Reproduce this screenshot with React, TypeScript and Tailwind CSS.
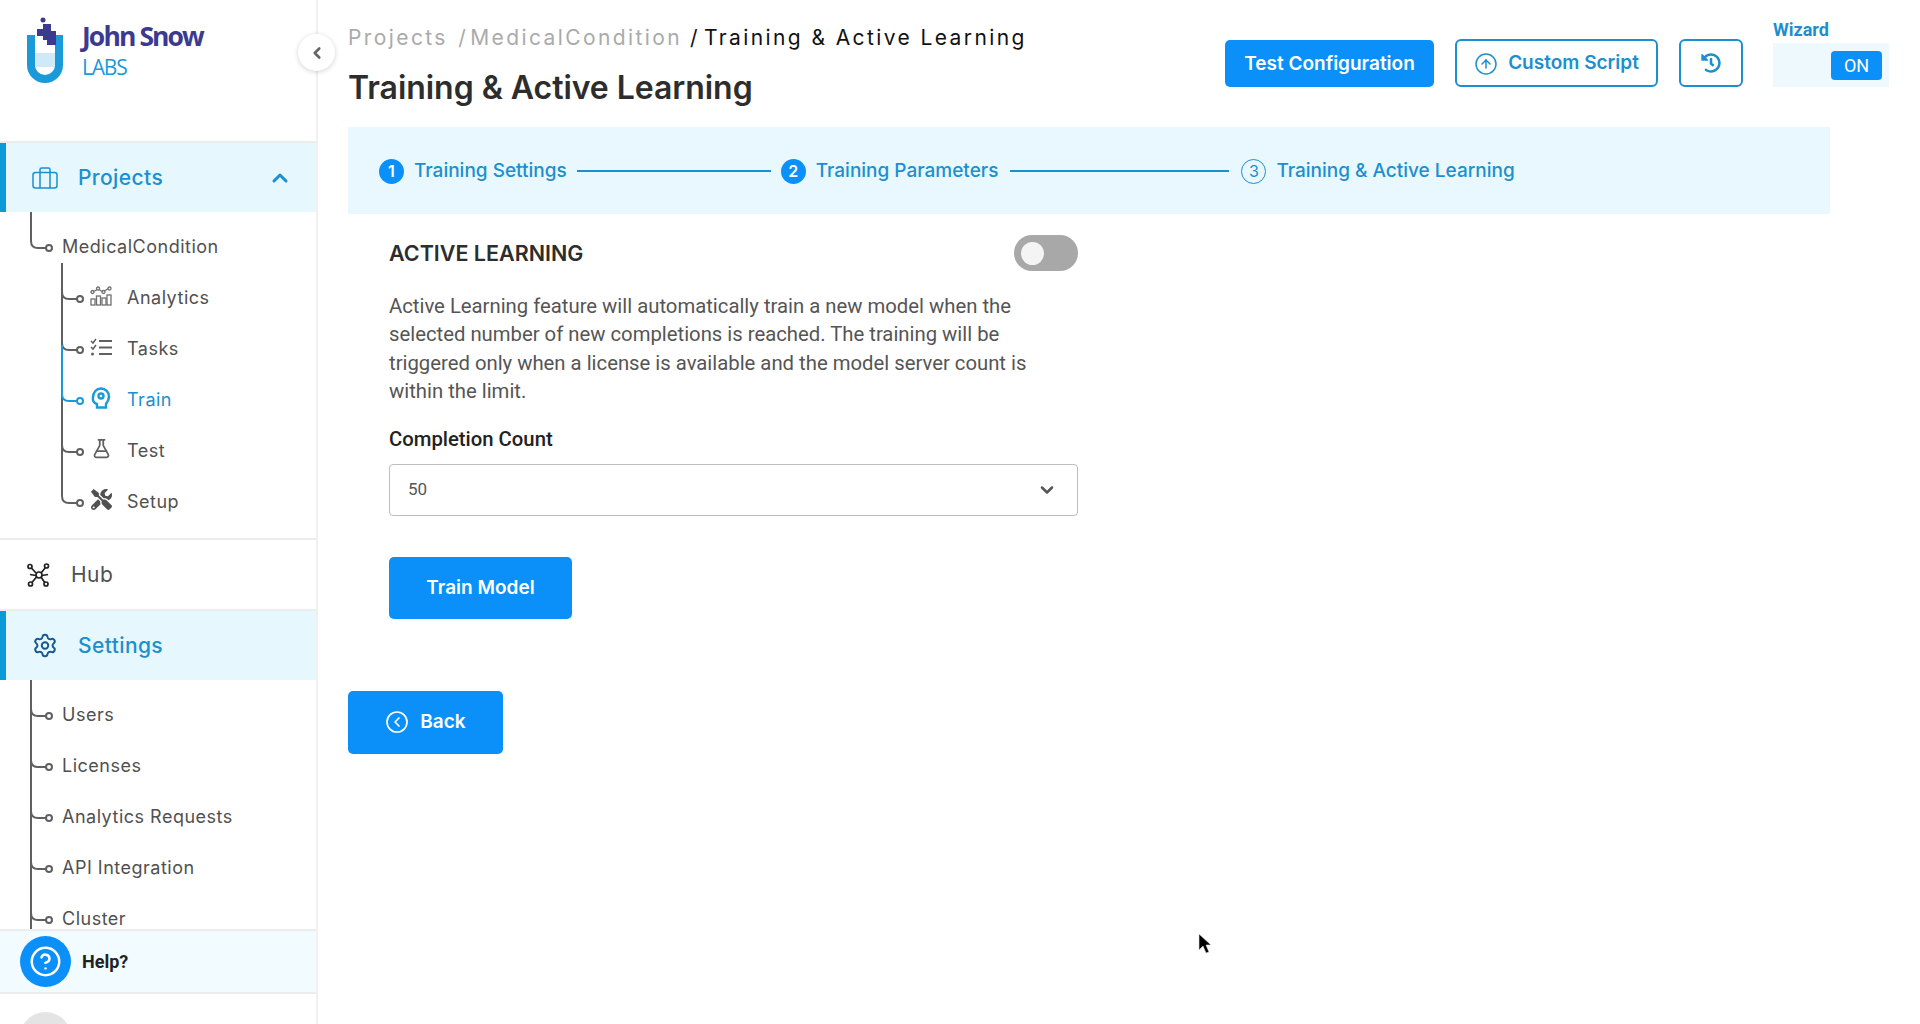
import { ChevronDown, ChevronLeft, ChevronUp, CircleArrowUp, CircleChevronLeft, CircleHelp, FlaskConical, Settings } from 'lucide-react'
import { FaHistory, FaTools } from 'react-icons/fa'

const sans = "font-['Inter','Noto_Sans',sans-serif]"
const roboto = "font-['Roboto','Liberation_Sans',sans-serif]"

function Logo() {
  return (
    <div className="flex items-start pl-[25px] pt-[17px] h-[143px] border-b-2 border-[#ececec]">
      <svg width="42" height="68" viewBox="0 0 42 68" className="shrink-0">
        <path d="M3 16h8v30a10 10 0 0 0 20 0V16h8v30a18 18 0 0 1-36 0z" fill="#1b9ad9" transform="translate(-1 2)" />
        <rect x="10" y="36" width="20" height="14" fill="#cfe9f8" />
        <circle cx="18" cy="3" r="2.5" fill="#3c3a8e" />
        <path d="M12 12h6V7h8v7h5v14h-9v-5h-4v-4h-6z" fill="#3c3a8e" />
      </svg>
      <div className="ml-[15px] mt-[3px]">
        <div className="font-['Open_Sans',sans-serif] font-bold text-[26.5px] leading-[32px] tracking-[-1.9px] text-[#3c3a8e]">John Snow</div>
        <div className="font-['Open_Sans',sans-serif] text-[21px] leading-[30px] tracking-[-1.2px] text-[#1b9ad9]">LABS</div>
      </div>
    </div>
  )
}

function Elbow({ last, active, stemTop = 0, blueFrom }: { last?: boolean; active?: boolean; stemTop?: number; blueFrom?: number }) {
  const c = active ? '#1b9ad9' : '#606060'
  return (
    <svg width="24" height="51" viewBox="0 0 24 51" className="shrink-0 overflow-visible">
      {!last && <path d={`M1 ${-stemTop}V51`} stroke="#606060" strokeWidth="2" fill="none" />}
      <path d={`M1 ${blueFrom ?? -stemTop}V22q0 7 7 7h8`} stroke={c} strokeWidth="2" fill="none" />
      <circle cx="19" cy="29" r="3" stroke={c} strokeWidth="2" fill="#fff" />
    </svg>
  )
}

function AnalyticsIcon() {
  return (
    <svg width="22" height="20" viewBox="0 0 22 20" fill="none" stroke="#707070" strokeWidth="1.3">
      <path d="M3 6l5-3 5 3 6-4" />
      <circle cx="2.5" cy="6" r="1.5" fill="#fff" />
      <circle cx="8" cy="2.5" r="1.5" fill="#fff" />
      <circle cx="13.5" cy="6" r="1.5" fill="#fff" />
      <circle cx="19.5" cy="2.5" r="1.5" fill="#fff" />
      <rect x="1" y="13" width="4" height="6" />
      <rect x="6.5" y="10" width="4" height="9" />
      <rect x="12" y="12" width="4" height="7" />
      <rect x="17" y="9" width="4" height="10" />
    </svg>
  )
}

function TasksIcon() {
  return (
    <svg width="22" height="18" viewBox="0 0 22 18" fill="none" stroke="#606060" strokeWidth="2">
      <path d="M1 3l2 2 3-4M1 9l2 2 3-4" strokeWidth="1.5" />
      <circle cx="2.5" cy="16" r="1.5" fill="#606060" stroke="none" />
      <path d="M9 3h13M9 9.5h13M9 16h13" />
    </svg>
  )
}

function TrainIcon() {
  return (
    <svg width="20" height="22" viewBox="0 0 20 22" fill="none" stroke="#1b9ad9" strokeWidth="2.4">
      <path d="M6 20.5v-3.500c-3-1-4.500-3.500-4-6.500C2 5 5.500 1.500 10 1.500c4.500 0 8 3.500 8 8 0 3-2 6-3 7.500v3.500z" />
      <circle cx="10" cy="9" r="2.5" />
    </svg>
  )
}

function HubIcon() {
  return (
    <svg width="24" height="24" viewBox="0 0 24 24" fill="none" stroke="#222" strokeWidth="1.7">
      <path d="M3.5 4l5.500 6M18.500 4.500L14 10M4.500 20l5-6M18 20l-4-6M3 11.500l6 1M21 11.500l-6 1" />
      <circle cx="12" cy="12" r="3" fill="#fff" />
      <circle cx="3" cy="3.5" r="2" fill="#fff" />
      <circle cx="19.5" cy="3" r="2" fill="#fff" />
      <circle cx="3.5" cy="21" r="2" fill="#fff" />
      <circle cx="19" cy="21" r="2" fill="#fff" />
    </svg>
  )
}

function CaseIcon() {
  return (
    <svg width="26" height="22" viewBox="0 0 26 22" fill="none" stroke="#1b8fd0" strokeWidth="1.5">
      <rect x="1" y="5.5" width="24" height="15.5" rx="2.5" />
      <path d="M8 5.500V2.500a1.500 1.500 0 0 1 1.500-1.500h7a1.500 1.500 0 0 1 1.500 1.500v3M8 5.500V21M18 5.500V21" />
    </svg>
  )
}

function ActiveSection({ icon, label, chevron }: { icon: React.ReactNode; label: string; chevron?: boolean }) {
  return (
    <div className="flex items-center h-[69px] bg-[#e6f7fe] border-l-[6px] border-[#0a9ad8] pl-[26px] pr-[24px]">
      <div className="w-[26px] flex justify-center">{icon}</div>
      <span className={`${sans} ml-[20px] text-[21px] font-medium text-[#1b8fd0] tracking-[0.4px]`}>{label}</span>
      {chevron && <ChevronUp className="ml-auto text-[#1b8fd0]" size={24} strokeWidth={3} />}
    </div>
  )
}

const subItems = [
  { label: 'Analytics', icon: <AnalyticsIcon /> },
  { label: 'Tasks', icon: <TasksIcon /> },
  { label: 'Train', icon: <TrainIcon />, active: true },
  { label: 'Test', icon: <FlaskConical size={21} className="text-[#606060]" strokeWidth={2} /> },
  { label: 'Setup', icon: <FaTools size={21} className="text-[#505050]" /> },
]

const settingItems = ['Users', 'Licenses', 'Analytics Requests', 'API Integration', 'Cluster']

function Sidebar() {
  return (
    <aside className="relative w-[318px] shrink-0 h-screen flex flex-col border-r-2 border-[#f0f0f0] overflow-visible">
      <Logo />
      <button className="absolute left-[298px] top-[34px] w-[37px] h-[37px] rounded-full bg-white shadow-[0_1px_5px_rgba(0,0,0,0.18)] flex items-center justify-center z-10">
        <ChevronLeft size={18} strokeWidth={3.5} className="text-[#666]" />
      </button>
      <div className="flex-1 min-h-0 overflow-hidden">
        <ActiveSection icon={<CaseIcon />} label="Projects" chevron />
        <div className="pl-[30px] pt-[7px]">
          <div className="flex h-[51px]">
            <Elbow last stemTop={7} />
            <span className={`${sans} text-[18px] text-[#505050] mt-[14px] ml-[8px] tracking-[0.5px]`}>MedicalCondition</span>
          </div>
          <div className="pl-[31px]">
            {subItems.map((item, i) => (
              <div key={item.label} className="flex h-[51px]">
                <Elbow last={i === subItems.length - 1} active={item.active} stemTop={i === 0 ? 7 : 0} blueFrom={item.active ? -27 : undefined} />
                <div className="w-[24px] ml-[4px] h-[51px] flex items-center justify-center">{item.icon}</div>
                <span className={`${sans} text-[18px] mt-[14px] ml-[14px] tracking-[0.5px] ${item.active ? 'text-[#1b8fd0]' : 'text-[#505050]'}`}>{item.label}</span>
              </div>
            ))}
          </div>
        </div>
        <div className="mt-[13px] h-[73px] border-y-2 border-[#ececec] flex items-center pl-[27px]">
          <HubIcon />
          <span className={`${sans} ml-[20px] text-[21px] text-[#505050] tracking-[0.5px]`}>Hub</span>
        </div>
        <ActiveSection icon={<Settings size={27} strokeWidth={1.8} className="text-[#14588c]" />} label="Settings" />
        <div className="pl-[30px] pt-[7px]">
          {settingItems.map((label, i) => (
            <div key={label} className="flex h-[51px]">
              <Elbow stemTop={i === 0 ? 7 : 0} />
              <span className={`${sans} text-[18px] mt-[14px] ml-[8px] tracking-[0.5px] text-[#505050]`}>{label}</span>
            </div>
          ))}
        </div>
      </div>
      <div className="h-[65px] bg-[#f2fbff] border-y-2 border-[#ececec] flex items-center pl-[20px] shrink-0">
        <div className="w-[51px] h-[51px] rounded-full bg-[#0a90f8] flex items-center justify-center">
          <CircleHelp size={33} strokeWidth={1.8} className="text-white" />
        </div>
        <span className={`${roboto} ml-[11px] text-[18px] font-bold text-[#222]`}>Help?</span>
      </div>
      <div className="h-[30px] shrink-0 overflow-hidden pl-[20px] pt-[18px]">
        <div className="w-[51px] h-[51px] rounded-full bg-[#e4e4e4]" />
      </div>
    </aside>
  )
}

function Step({ n, label, filled }: { n: number; label: string; filled?: boolean }) {
  return (
    <div className="flex items-center shrink-0">
      <span className={`w-[25px] h-[25px] rounded-full flex items-center justify-center text-[16px] ${filled ? 'bg-[#0a90f8] text-white font-semibold' : 'border border-[#1b8fd0] text-[#1b8fd0]'}`}>{n}</span>
      <span className="ml-[10px] pt-[1px] text-[19px] text-[#1b8fd0] font-medium">{label}</span>
    </div>
  )
}

function Header() {
  return (
    <div className="flex h-[127px] items-start">
      <div className={`${sans} pt-[25px]`}>
        <div className="flex text-[21px] leading-[26px] tracking-[2.4px] whitespace-nowrap">
          <span className="text-[#aaaaaa] [word-spacing:2px]">Projects /</span>
          <span className="ml-[2px] text-[#aaaaaa]">MedicalCondition</span>
          <span className="ml-[8px] text-[#111]">/</span>
          <span className="ml-[4px] text-[#111]">Training &amp; Active Learning</span>
        </div>
        <h1 className="mt-[15px] text-[32px] leading-[44px] font-semibold text-[#2d2d2d] tracking-[-0.05px] whitespace-nowrap">Training &amp; Active Learning</h1>
      </div>
      <div className={`${sans} ml-auto flex items-start pt-[39px] font-medium`}>
        <button className="mt-px w-[209px] h-[47px] pt-[1px] rounded-[5px] bg-[#0a90f8] text-white text-[19px] font-semibold">Test Configuration</button>
        <button className="ml-[21px] w-[203px] h-[48px] pt-[1px] rounded-[6px] border-2 border-[#1b8fd0] text-[#1b8fd0] text-[19px] flex items-center justify-center gap-[10px] font-semibold">
          <CircleArrowUp size={24} strokeWidth={1.5} />
          Custom Script
        </button>
        <button className="ml-[21px] w-[64px] h-[48px] rounded-[6px] border-2 border-[#1b8fd0] text-[#1b8fd0] flex items-center justify-center">
          <FaHistory size={20} />
        </button>
        <div className="ml-[30px] w-[116px] -mt-[19px] mr-[-59px]">
          <div className={`${roboto} text-[18px] leading-[20px] font-bold text-[#1b8fd0]`}>Wizard</div>
          <div className="mt-[3px] h-[44px] bg-[#eef9fe] flex items-center justify-end pr-[7px]">
            <span className={`${roboto} w-[51px] h-[29px] rounded-[4px] bg-[#0a90f8] text-white text-[18px] font-normal flex items-center justify-center`}>ON</span>
          </div>
        </div>
      </div>
    </div>
  )
}

export default function App() {
  return (
    <div className="flex h-screen bg-white overflow-hidden relative">
      <Sidebar />
      <main className={`${sans} flex-1 min-w-0 pl-[30px] pr-[90px]`}>
        <Header />
        <div className="h-[87px] bg-[#e9f8fe] flex items-center pl-[31px] pt-[1px]">
          <Step n={1} label="Training Settings" filled />
          <span className="w-[194px] h-[2px] bg-[#1b8fd0] mx-[10px]" />
          <Step n={2} label="Training Parameters" filled />
          <span className="w-[219px] h-[2px] bg-[#1b8fd0] mx-[12px]" />
          <Step n={3} label="Training & Active Learning" />
        </div>
        <section className="ml-[41px] w-[689px] pt-[21px]">
          <div className="flex items-center justify-between h-[36px]">
            <h2 className="text-[21.5px] font-semibold text-[#2d2d2d]">ACTIVE LEARNING</h2>
            <div className="w-[64px] h-[36px] rounded-full bg-[#a8a8a8] flex items-center pl-[7px]">
              <span className="w-[23px] h-[23px] rounded-full bg-[#f4f4f4]" />
            </div>
          </div>
          <p className={`${roboto} mt-[21px] max-w-[650px] text-[20.3px] leading-[28.4px] text-[#555]`}>
            Active Learning feature will automatically train a new model when the selected number of new completions is reached. The training will be triggered only when a license is available and the model server count is within the limit.
          </p>
          <div className={`${roboto} mt-[19px] text-[20.3px] leading-[28px] font-medium text-[#222]`}>Completion Count</div>
          <div className={`${roboto} mt-[11px] h-[52px] rounded-[4px] border border-[#bdbdbd] flex items-center pl-[18px] pr-[20px] pt-[1px] text-[17px] text-[#555]`}>
            50
            <ChevronDown size={20} strokeWidth={3} className="ml-auto text-[#555]" />
          </div>
          <button className="mt-[41px] w-[183px] h-[62px] pt-[2px] rounded-[5px] bg-[#0a90f8] text-white text-[19px] font-semibold">Train Model</button>
        </section>
        <button className="mt-[72px] w-[155px] h-[63px] rounded-[5px] bg-[#0a90f8] text-white text-[19px] font-semibold flex items-center justify-center gap-[11px]">
          <CircleChevronLeft size={24} strokeWidth={1.7} />
          Back
        </button>
      </main>
      {/* mouse pointer captured in the shot */}
      <svg width="14" height="22" viewBox="0 0 14 22" className="absolute left-[1198px] top-[933px]">
        <path d="M1 1v16l4-4 3 7 3-1-3-7h5z" fill="#000" stroke="#ddd" strokeWidth="0.6" />
      </svg>
    </div>
  )
}
